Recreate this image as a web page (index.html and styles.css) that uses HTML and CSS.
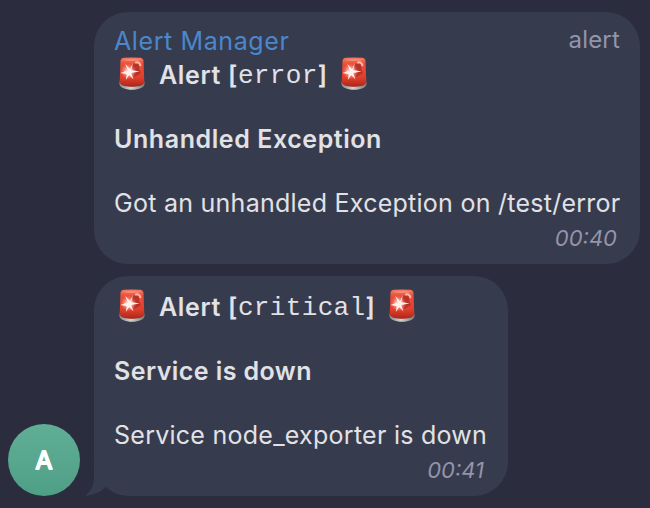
FILE: index.html
```html
<!DOCTYPE html>
<html lang="en">
<head>
<meta charset="utf-8">
<title>Alert Manager</title>
<link rel="stylesheet" href="styles.css">
</head>
<body>
<svg class="defs" aria-hidden="true">
  <defs>
    <linearGradient id="red" x1="0" y1="0" x2="0" y2="1"><stop offset="0" stop-color="#f4795f"/><stop offset=".22" stop-color="#e8503a"/><stop offset=".7" stop-color="#e03d2a"/><stop offset="1" stop-color="#a8261a"/></linearGradient>
    <linearGradient id="base" x1="0" y1="0" x2="1" y2="0"><stop offset="0" stop-color="#85878a"/><stop offset=".45" stop-color="#d3d4cf"/><stop offset="1" stop-color="#777b80"/></linearGradient>
    <radialGradient id="glow"><stop offset="0" stop-color="#fff"/><stop offset=".35" stop-color="#ffd9d4" stop-opacity=".8"/><stop offset="1" stop-color="#ff8070" stop-opacity="0"/></radialGradient>
    <symbol id="siren" viewBox="0 0 26 34">
      <path d="M.4 26.5 1 23h24l.6 3.5c.3 3.8-5.6 6.3-12.6 6.3S.1 30.300.4 26.500Z" fill="url(#base)"/>
      <path d="M1.500 4Q1.700 1 5 .8q8-.6 16 0 3.300.2 3.500 3.200l.8 21.500c-1.500 3.500-6.500 4.300-12.300 4.300S2.200 29 .7 25.500Z" fill="url(#red)"/>
      <path d="M3 3q10-2.500 20 0-10 1.800-20 0Z" fill="#f6a08c" opacity=".65"/>
      <path d="M13 8q5-4 8-1l-1 5 2 4-7 4Z" fill="#a72b27" opacity=".75"/>
      <path d="M17 5.500q3.500-.8 4.300 2.800" fill="none" stroke="#ffb5ac" stroke-width="2.200" stroke-linecap="round"/>
      <circle cx="9.500" cy="14.500" r="8" fill="url(#glow)"/>
      <path d="m9.500 14.500-3.500-8 5 5.800L14 6l-1.800 7 8.300 1.500-8.300 1.600 2.300 6.400-4.300-4.500-3.400 5 1-5.800L1.500 16l5.300-2Z" fill="#fff1ee"/>
    </symbol>
  </defs>
</svg>
<main class="chat">
  <svg class="avatar" viewBox="0 0 72 72"><text class="initial" x="36" y="45" text-anchor="middle">A</text></svg>
  <div class="messages">
    <article class="bubble first">
      <header class="head"><span class="sender">Alert Manager</span><span class="role">alert</span></header>
      <p class="line title"><svg class="siren"><use href="#siren"/></svg><span class="label">Alert [</span><code>error</code><span>]</span><svg class="siren end"><use href="#siren"/></svg></p>
      <p class="line subject exception">Unhandled Exception</p>
      <p class="line detail">Got an unhandled Exception on /test/error</p>
      <time class="time">00:40</time>
    </article>
    <article class="bubble second">
      <p class="line title"><svg class="siren"><use href="#siren"/></svg><span class="label">Alert [</span><code>critical</code><span>]</span><svg class="siren end"><use href="#siren"/></svg></p>
      <p class="line subject">Service is down</p>
      <p class="line detail">Service node_exporter is down</p>
      <time class="time">00:41</time>
      <svg class="tail" viewBox="0 0 40 32"><path class="tail-gap" d="M0 0H9V10Q9 24 0 31V32H40Q30 31 21 23Q14 31 0 32Z"/><path class="tail-fill" d="M9 0V13Q9 25 0 32Q13 31 21 23L32 0Z"/></svg>
    </article>
  </div>
</main>
</body>
</html>
```

FILE: styles.css
```css
* { box-sizing: border-box; }
body {
  margin: 0;
  background: #2b2d3e;
  font-family: Inter, "Liberation Sans", sans-serif;
  font-size: 25px;
  color: #e1e2e5;
}
.defs { position: absolute; width: 0; height: 0; }
.chat {
  display: flex;
  align-items: flex-end;
  gap: 14px;
  height: 508px;
  padding: 12px 10px 12px 8px;
  overflow: hidden;
}
.avatar {
  flex: none;
  width: 72px;
  height: 72px;
  border-radius: 50%;
  background: linear-gradient(#60ae96, #4f9f86);
}
.initial {
  fill: #fff;
  stroke: #fff;
  stroke-width: 1.8px;
  stroke-linejoin: round;
  font-size: 24.5px;
  font-weight: 400;
}
.messages { display: flex; flex-direction: column; align-items: flex-start; gap: 12px; }
.bubble {
  position: relative;
  display: flex;
  flex-direction: column;
  border-radius: 34px;
  background: #373b4e;
  padding: 0 20px;
  white-space: nowrap;
}
.first { width: 546px; height: 252px; padding-top: 13px; }
.second { width: 414px; height: 220px; padding-top: 15px; }
.head { display: flex; justify-content: space-between; height: 34px; line-height: 32px; }
.sender { color: #4b87cb; letter-spacing: .6px; }
.role { color: #9494aa; font-size: 24px; line-height: 30px; letter-spacing: .2px; }
.line { margin: 0 0 32px; height: 32px; line-height: 32px; }
.line.detail { margin-bottom: 0; letter-spacing: .26px; }
.title { display: flex; font-weight: 600; }
.siren { flex: none; width: 26px; height: 34px; margin: -2px 14px 0 5px; }
.siren.end { margin: -2px 0 0 14px; }
.label { letter-spacing: .65px; }
.title code { padding-top: 1px; font: 400 26px/32px "Liberation Mono", monospace; letter-spacing: .35px; }
.subject { font-weight: 600; letter-spacing: .43px; }
.exception { letter-spacing: .57px; }
.time { align-self: flex-end; margin: 4px 3px 0 0; font-size: 22px; font-style: italic; line-height: 30px; color: #9494aa; }
.second .time { margin-right: 4px; }
.tail { position: absolute; left: -9px; bottom: 0; width: 40px; height: 32px; }
.tail-gap { fill: #2b2d3e; }
.tail-fill { fill: #373b4e; }
```
